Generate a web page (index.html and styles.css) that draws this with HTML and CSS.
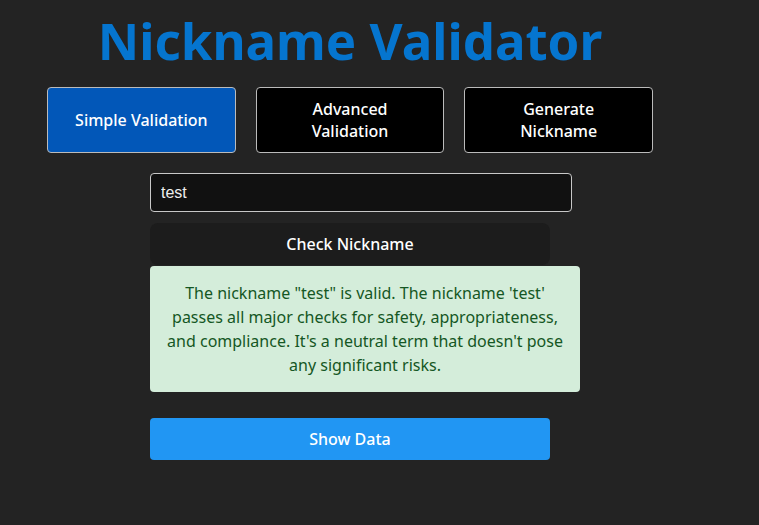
FILE: index.html
```html
<!DOCTYPE html>
<html>
<head>
<meta charset="utf-8">
<link rel="stylesheet" href="styles.css">
</head>
<body>
<div class="app">
  <h1 class="title">Nickname Validator</h1>
  <div class="tabs">
    <button class="tab active">Simple Validation</button>
    <button class="tab">Advanced Validation</button>
    <button class="tab">Generate Nickname</button>
  </div>
  <div class="form">
    <input class="nick-input" type="text" value="test">
    <button class="check-btn">Check Nickname</button>
    <div class="result">The nickname "test" is valid. The nickname 'test' passes all major checks for safety, appropriateness, and compliance. It's a neutral term that doesn't pose any significant risks.</div>
    <button class="show-btn">Show Data</button>
  </div>
</div>
</body>
</html>
```
FILE: styles.css
```css
html, body {
  margin: 0;
  padding: 0;
  background: #232323;
  font-family: "Noto Sans", sans-serif;
  color: #fff;
}
.app {
  width: 700px;
  display: flex;
  flex-direction: column;
  align-items: center;
}
.title {
  margin: 8px 0 0 0;
  font-size: 51px;
  line-height: 64px;
  font-weight: 700;
  color: #0575cf;
}
.tabs {
  display: flex;
  gap: 20px;
  margin-top: 15px;
  width: 606px;
}
.tab {
  flex: 1 1 0;
  height: 66px;
  background: #000;
  color: #fff;
  border: 1px solid #bbb;
  border-radius: 4px;
  font-family: "Noto Sans", sans-serif;
  font-size: 16px;
  font-weight: 500;
  line-height: 22px;
  padding: 0 24px;
}
.tab.active {
  background: #0257b8;
}
.form {
  width: 400px;
  margin-top: 20px;
  display: flex;
  flex-direction: column;
  align-items: flex-start;
}
.nick-input {
  height: 39px;
  box-sizing: border-box;
  width: 422px;
  padding: 0 10px;
  background: #111;
  border: 1px solid #c8c8c8;
  border-radius: 4px;
  color: #eee;
  font-family: "Liberation Sans", Arial, sans-serif;
  font-size: 16px;
}
.check-btn {
  margin-top: 11px;
  width: 400px;
  height: 42px;
  background: #1c1c1c;
  color: #fff;
  border: none;
  border-radius: 8px;
  font-family: "Noto Sans", sans-serif;
  font-size: 16px;
  font-weight: 500;
}
.result {
  margin-top: 1px;
  width: 430px;
  box-sizing: border-box;
  padding: 15px 15px;
  background: #d4edda;
  color: #155724;
  border-radius: 4px;
  font-size: 16px;
  line-height: 24px;
  text-align: center;
}
.show-btn {
  margin-top: 26px;
  width: 400px;
  height: 42px;
  background: #2196f3;
  color: #fff;
  border: none;
  border-radius: 4px;
  font-family: "Noto Sans", sans-serif;
  font-size: 16px;
  font-weight: 500;
}
```
